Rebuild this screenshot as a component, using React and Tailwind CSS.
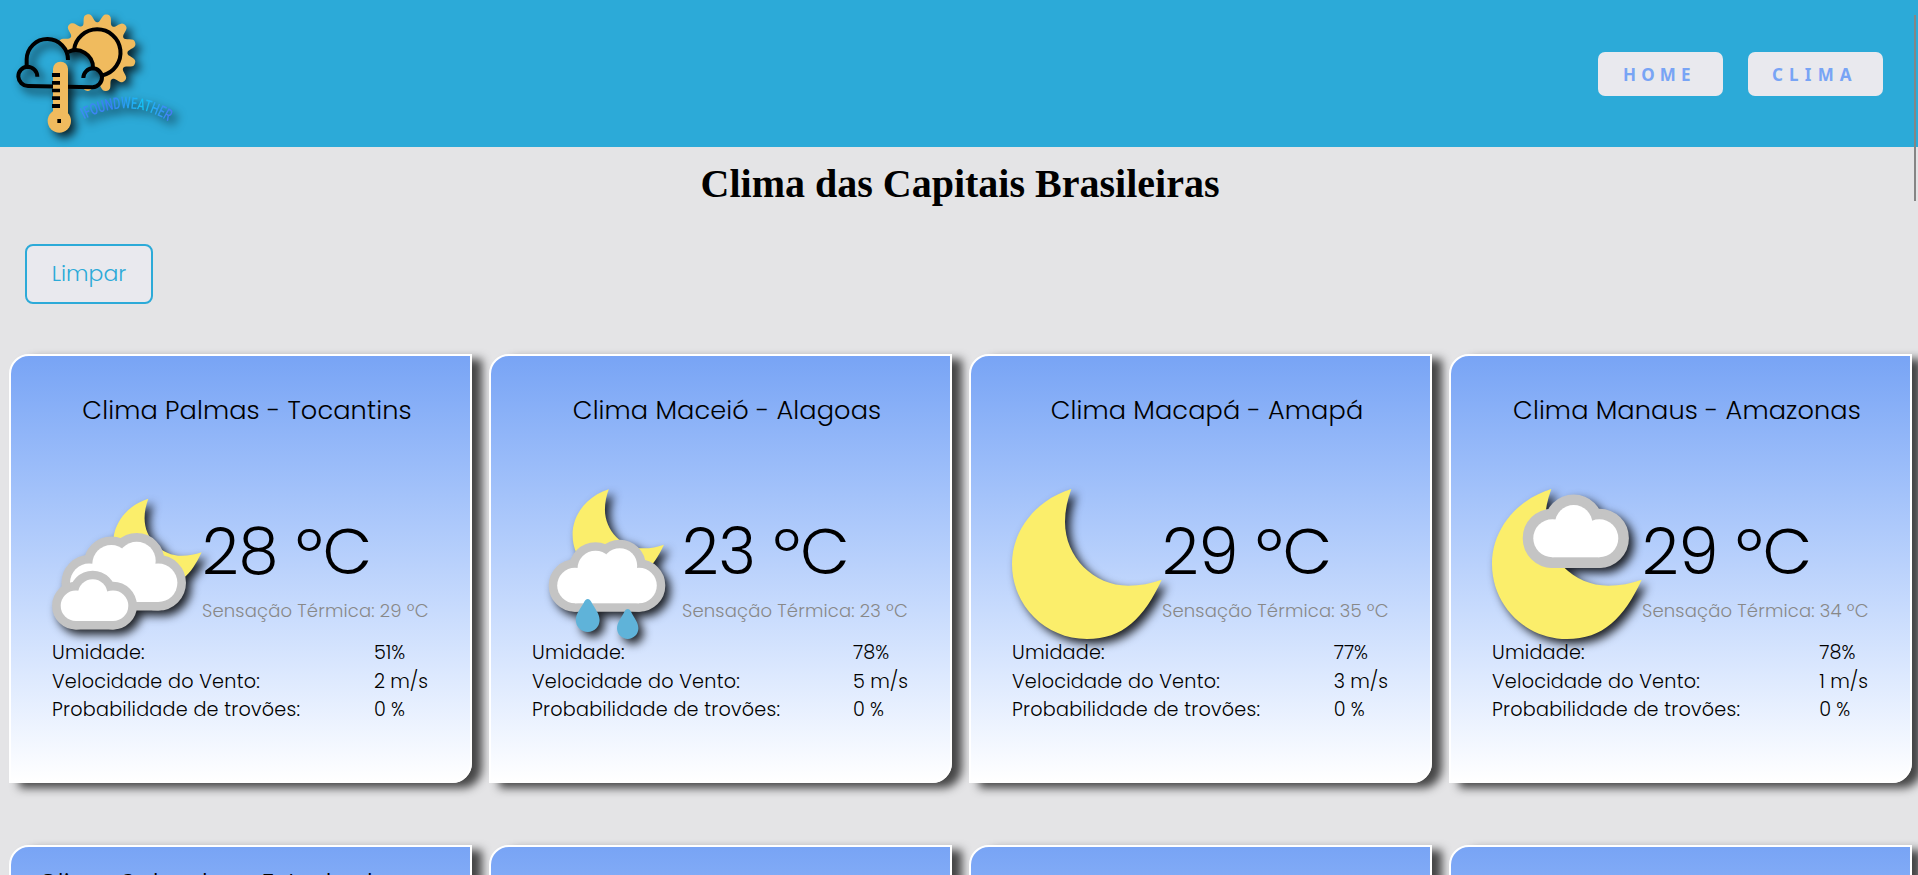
const FONT = "font-['Poppins','Inter',sans-serif] font-light [font-feature-settings:'cv11']";

function Logo() {
  const pts = [];
  for (let i = 0; i <= 240; i++) {
    const a = (i / 240) * Math.PI * 2;
    const r = 104 + 14 * Math.tanh(1.3 * (0.15 + Math.cos(12 * (a - 0.27)))) / 0.88;
    pts.push(`${(291 + r * Math.sin(a)).toFixed(1)},${(158 - r * Math.cos(a)).toFixed(1)}`);
  }
  return (
    <svg viewBox="0 0 720 441" className="h-[147px] w-[240px] overflow-visible drop-shadow-[5px_5px_5px_rgba(0,0,0,0.8)]">
      <defs>
        <mask id="outside-cloud" maskUnits="userSpaceOnUse" x="0" y="0" width="720" height="441">
          <rect width="720" height="441" fill="white" />
          <path d="M80 200V178A62 62 0 0 1 204 178V158A52 52 0 0 1 279 205A28 28 0 0 1 306 232A30 30 0 0 1 278 262L84 258A29 29 0 0 1 80 200Z" fill="black" />
        </mask>
        <linearGradient id="wordmark" gradientUnits="userSpaceOnUse" x1="245" x2="515" y1="0" y2="0">
          <stop offset="0" stopColor="#3d8af2" />
          <stop offset="0.3" stopColor="#3b7df5" />
          <stop offset="0.7" stopColor="#14c4f5" />
          <stop offset="1" stopColor="#4a78f5" />
        </linearGradient>
        <path id="wordmark-arc" d="M252 358Q385 290 502 362" />
      </defs>
      <g mask="url(#outside-cloud)">
        <polygon points={pts.join(" ")} fill="#f0bb5e" />
        <path d="M222 150A70 70 0 1 1 308 226" fill="none" stroke="#000" strokeWidth="12" />
      </g>
      <g fill="none" stroke="#000" strokeWidth="12">
        <path d="M80 200V178A62 62 0 0 1 204 180" />
        <path d="M204 156A52 52 0 0 1 279 203" />
        <path d="M112 230A30 30 0 0 0 82 200A29 29 0 0 0 55 230A30 30 0 0 0 84 258L278 262A30 30 0 0 0 306 232A28 28 0 0 0 278 205A29 29 0 0 0 250 234" />
      </g>
      <rect x="159" y="185" width="45" height="180" rx="22" fill="#f0bb5e" />
      <circle cx="178" cy="363" r="35" fill="#f0bb5e" />
      <path d="M156 219h24v12h-24zM156 243h24v11h-24zM156 266h24v11h-24zM156 289h24v11h-24zM156 312h24v12h-24zM172 357h11v12h-11z" />
      <text fill="url(#wordmark)" className="font-['Roboto'] text-[48px] font-medium">
        <textPath href="#wordmark-arc" textLength="266" lengthAdjust="spacingAndGlyphs">IFOUNDWEATHER</textPath>
      </text>
    </svg>
  );
}

function Moon({ transform }) {
  return (
    <path
      transform={transform}
      fill="#fbee6b"
      d="M59.3 0C24 11 0 41 0 75C0 116.5 33.5 150 75 150C111 150 132 129 149.7 90.7C139 94.5 128 96.7 116.3 96.7C81.5 96.7 53 68 53 33C53 21.5 55.5 10.5 59.3 0Z"
    />
  );
}

function Cloud({ lobes, body, edge }) {
  const shape = (
    <>
      {lobes.map(([cx, cy, r], i) => (
        <circle key={i} cx={cx} cy={cy} r={r} />
      ))}
      <rect x={body[0]} y={body[1]} width={body[2]} height={body[3]} />
    </>
  );
  return (
    <>
      <g fill="#c4c4c4" stroke="#c4c4c4" strokeWidth={edge * 2} strokeLinejoin="round">{shape}</g>
      <g fill="#fff">{shape}</g>
    </>
  );
}

const ICONS = {
  clouds: (
    <>
      <Moon transform="translate(61.3 9.7) scale(.59)" />
      <Cloud edge={8.6} body={[37.2, 80, 69, 33]} lobes={[[37.2, 93.8, 19.2], [106.2, 93.8, 19.2], [59.3, 75, 19], [84.7, 71.7, 19]]} />
      <Cloud edge={8.6} body={[24, 108, 37, 24]} lobes={[[24, 116.7, 15.3], [61, 116.7, 15.3], [40.7, 105, 14.7]]} />
    </>
  ),
  rain: (
    <>
      <Moon transform="translate(40.6 .3) scale(.61)" />
      <Cloud edge={8.5} body={[43, 82, 64, 32.3]} lobes={[[43, 96.5, 17.8], [107, 96.5, 17.8], [63.5, 79.7, 18], [87.7, 76.7, 17.5]]} />
      <g fill="#5fb3d9">
        <path d="M55.7 110C57.5 110 58.6 111.3 59.5 113.2C62.5 119 67.6 124.5 67.6 131A11.9 11.9 0 0 1 43.8 131C43.8 124.5 49 119 52 113.2C52.9 111.3 54 110 55.7 110Z" />
        <path d="M95.7 120C97.3 120 98.3 121.2 99.1 122.9C101.8 128.2 106.4 133.2 106.4 139.3A10.7 10.7 0 0 1 85 139.3C85 133.2 89.6 128.2 92.3 122.9C93.1 121.2 94.1 120 95.7 120Z" />
      </g>
    </>
  ),
  clear: <Moon />,
  partly: (
    <>
      <Moon />
      <Cloud edge={10.6} body={[60.3, 40, 47, 28.3]} lobes={[[60.3, 49.3, 19], [107.3, 49.3, 19], [81.7, 34.7, 18.7]]} />
    </>
  ),
};

const CARDS = [
  { title: "Clima Palmas - Tocantins", icon: "clouds", temp: 28, feels: 29, hum: "51%", wind: "2 m/s", thunder: "0 %" },
  { title: "Clima Maceió - Alagoas", icon: "rain", temp: 23, feels: 23, hum: "78%", wind: "5 m/s", thunder: "0 %" },
  { title: "Clima Macapá - Amapá", icon: "clear", temp: 29, feels: 35, hum: "77%", wind: "3 m/s", thunder: "0 %" },
  { title: "Clima Manaus - Amazonas", icon: "partly", temp: 29, feels: 34, hum: "78%", wind: "1 m/s", thunder: "0 %" },
];

const CARD =
  "h-[429px] w-[463px] shrink-0 rounded-tl-[20px] rounded-br-[20px] border-2 border-white bg-linear-to-b from-[#78a4f5] to-white shadow-[10px_5px_10px_rgba(0,0,0,0.7)]";

function Card({ c }) {
  return (
    <article className={CARD + " flex flex-col pt-[35px]"}>
      <h2 className="pl-[13px] text-center text-[25.6px] leading-[38px] tracking-[0.12px]">{c.title}</h2>
      <div className="mt-[60px] flex h-[150px] items-center pl-[41px]">
        <svg viewBox="0 0 150 150" className="size-[150px] shrink-0 overflow-visible drop-shadow-[5px_5px_5px_rgba(0,0,0,0.85)]">
          {ICONS[c.icon]}
        </svg>
        <div className="relative whitespace-nowrap">
          <p className="text-[64px] leading-[96px] tracking-[-0.2px]">{c.temp} ºC</p>
          <p className="-mt-[3px] text-[18px] leading-[27px] tracking-[0.16px] text-[#888]">Sensação Térmica: {c.feels} ºC</p>
        </div>
      </div>
      <dl className="relative mr-[42px] ml-[41px] grid grid-cols-[1fr_auto] text-[19.2px] leading-[28.5px] [&_dt]:tracking-[0.23px]">
        <dt>Umidade:</dt>
        <dd>{c.hum}</dd>
        <dt>Velocidade do Vento:</dt>
        <dd>{c.wind}</dd>
        <dt>Probabilidade de trovões:</dt>
        <dd>{c.thunder}</dd>
      </dl>
    </article>
  );
}

export default function App() {
  return (
    <div className={"relative h-[875px] w-[1918px] overflow-hidden bg-[#e4e4e6] text-black " + FONT}>
      <header className="flex h-[147px] items-center justify-between bg-[#2caad8] pr-[35px]">
        <Logo />
        <nav className="flex gap-[25px] font-['Noto_Sans'] text-[17px] font-bold text-[#78a4f5]">
          <a className="flex h-11 w-[125px] items-center rounded-[7px] bg-[#e9e9ee] pt-[2px] pl-[25px] tracking-[5.2px]">HOME</a>
          <a className="flex h-11 w-[135px] items-center rounded-[7px] bg-[#e9e9ee] pt-[2px] pl-[24px] tracking-[6.2px]">CLIMA</a>
        </nav>
      </header>
      <h1 className="pt-[14px] pl-[2px] text-center font-['Liberation_Serif'] text-[40px] leading-[46px] font-bold">Clima das Capitais Brasileiras</h1>
      <button className="mt-[37px] ml-[25px] flex h-[60px] w-[128px] items-center justify-center rounded-[8px] border-2 border-[#2caad8] bg-[#e9e9ee] pb-[2px] text-[22px] text-[#2caad8]">Limpar</button>
      <main className="mt-[50px] ml-[9px] grid w-max grid-cols-[repeat(4,463px)] gap-x-[17px] gap-y-[62px]">
        {CARDS.map((c) => <Card key={c.title} c={c} />)}
        <article className={CARD + " pt-[17px] pl-[27px]"}>
          <h2 className="w-[410px] text-[25.6px] leading-[38px] tracking-[0.13px]">Clima Salvador - Estado da Bahia</h2>
        </article>
        <article className={CARD} />
        <article className={CARD} />
        <article className={CARD} />
      </main>
      <div className="absolute top-[15px] left-[1914px] h-[186px] w-0.5 bg-[#858585]" />
    </div>
  );
}
